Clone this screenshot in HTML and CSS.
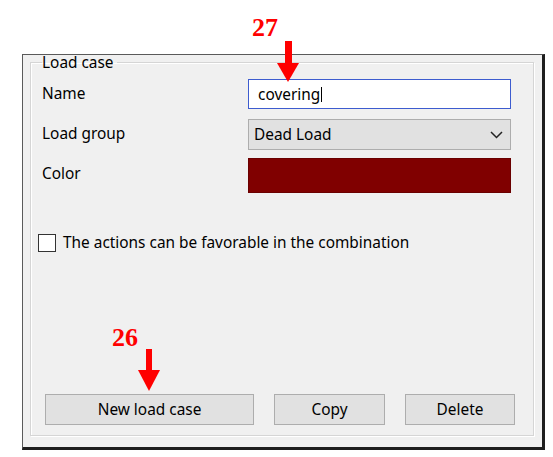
FILE: index.html
```html
<!DOCTYPE html>
<html lang="en">
<head>
<meta charset="utf-8">
<title>Load case</title>
<link rel="stylesheet" href="styles.css">
</head>
<body>
<div class="stage">
  <div class="panel">
    <fieldset class="group">
      <legend class="legend">Load case</legend>
      <div class="row row-name">
        <span class="label">Name</span>
        <div class="input"><span class="value">covering</span><span class="caret"></span></div>
      </div>
      <div class="row row-group">
        <span class="label">Load group</span>
        <div class="select">
          <span class="value">Dead Load</span>
          <svg class="chev" width="13" height="8" viewBox="0 0 13 8"><path d="M1 1 L6.5 6.5 L12 1" fill="none" stroke="#222" stroke-width="1.5"/></svg>
        </div>
      </div>
      <div class="row row-color">
        <span class="label">Color</span>
        <div class="swatch"></div>
      </div>
      <label class="check">
        <span class="box"></span>
        <span class="check-text">The actions can be favorable in the combination</span>
      </label>
      <div class="buttons">
        <button class="btn btn-new">New load case</button>
        <button class="btn btn-copy">Copy</button>
        <button class="btn btn-delete">Delete</button>
      </div>
    </fieldset>
  </div>

  <div class="mark mark-27">
    <span class="num">27</span>
    <svg class="arrow" width="22" height="41" viewBox="0 0 22 41"><rect x="8" y="0" width="7" height="22" fill="#ff0000"/><polygon points="0,22 22,22 11,41" fill="#ff0000"/></svg>
  </div>
  <div class="mark mark-26">
    <span class="num">26</span>
    <svg class="arrow" width="22" height="42" viewBox="0 0 22 42"><rect x="8" y="0" width="6" height="21" fill="#ff0000"/><polygon points="0,21 22,21 11,42" fill="#ff0000"/></svg>
  </div>
</div>
</body>
</html>
```

FILE: styles.css
```css
html, body {
  margin: 0;
  padding: 0;
  background: #ffffff;
}

body {
  font-family: "Noto Sans", "Open Sans", sans-serif;
  font-size: 15.4px;
  color: #000;
}

.stage {
  position: relative;
  width: 553px;
  height: 457px;
  padding: 54px 0 0 22px;
  box-sizing: border-box;
}

.panel {
  box-sizing: border-box;
  width: 523px;
  height: 396px;
  background: #f0f0f0;
  border-top: 1px solid #5a5a5a;
  border-left: 1px solid #5a5a5a;
  border-right: 3px solid #1e1e1e;
  border-bottom: 3px solid #1e1e1e;
  padding: 0 8px 11px 7px;
  display: flex;
  flex-direction: column;
}

.group {
  flex: 1;
  margin: 0;
  min-width: 0;
  border: 1px solid #d5d5d5;
  box-shadow: inset 1px 1px 0 #ffffff, 1px 1px 0 #ffffff;
  padding: 9px 22px 10px 11px;
  display: flex;
  flex-direction: column;
}

.legend {
  padding: 1px 3px 0 0;
  margin-left: 0;
  line-height: 14px;
  height: 14px;
}

.row {
  display: flex;
  align-items: center;
  justify-content: space-between;
}

.row-group { margin-top: 10px; }
.row-color { margin-top: 8px; }

.label {
  margin-top: -3px;
}

.row-name .label {
  margin-top: -1px;
}

.row-color .label {
  margin-top: -5px;
}

.input {
  box-sizing: border-box;
  width: 263px;
  height: 30px;
  background: #fff;
  border: 1px solid #3d5ccf;
  display: flex;
  align-items: center;
  padding-left: 9px;
}

.caret {
  display: inline-block;
  width: 0;
  height: 15px;
  border-left: 1px solid #000;
  margin-left: 1px;
  margin-top: 1px;
}

.select {
  box-sizing: border-box;
  width: 263px;
  height: 31px;
  background: #e1e1e1;
  border: 1px solid #adadad;
  display: flex;
  align-items: center;
  justify-content: space-between;
  padding: 0 7px 0 5px;
}

.chev {
  display: block;
}

.swatch {
  box-sizing: border-box;
  width: 263px;
  height: 35px;
  background: #800000;
  border: 1px solid #6a0000;
}

.check {
  display: flex;
  align-items: center;
  margin-top: 39px;
  margin-left: -4px;
}

.box {
  box-sizing: border-box;
  width: 18px;
  height: 18px;
  border: 1px solid #333;
  background: #fff;
  margin-right: 7px;
}

.buttons {
  margin-top: auto;
  margin-left: 3px;
  margin-right: -4px;
  display: flex;
  justify-content: space-between;
}

.btn {
  box-sizing: border-box;
  height: 31px;
  background: #e1e1e1;
  border: 1px solid #adadad;
  font: inherit;
  color: #000;
  padding: 0;
}

.btn-new { width: 209px; }
.btn-copy { width: 111px; }
.btn-delete { width: 110px; }

.mark {
  position: absolute;
  display: flex;
  flex-direction: column;
  align-items: flex-start;
}

.num {
  font-family: "Liberation Serif", serif;
  font-weight: bold;
  font-size: 26px;
  line-height: 26px;
  color: #ff0000;
}

.mark-27 { left: 252px; top: 15px; }
.mark-27 .arrow { margin-left: 25px; margin-top: 0; }

.mark-26 { left: 112px; top: 325px; }
.mark-26 .arrow { margin-left: 26px; margin-top: -2px; }
```
